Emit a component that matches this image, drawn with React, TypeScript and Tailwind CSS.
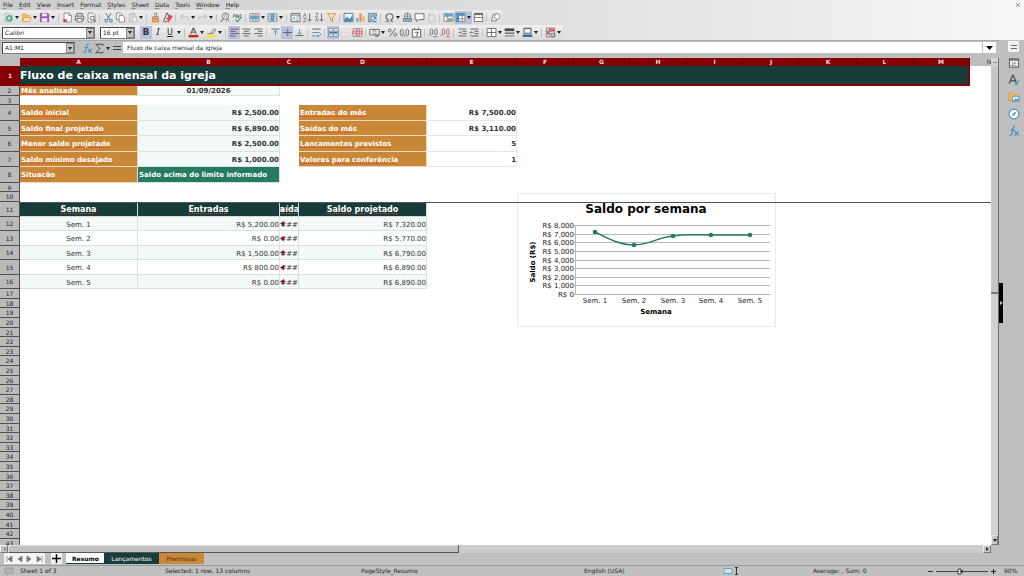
import type { ReactNode } from "react";

const G = "#646464";
const B = "#4a94c6";

const art: Record<string, ReactNode> = {
  new: (
    <>
      <path d="M3 2h7l3 3v9H3z" fill="#eef7f2" stroke="#8aa89a" />
      <circle cx="9" cy="9" r="4.5" fill="#4aa57c" />
      <path d="M9 6.5v5M6.5 9h5" stroke="#fff" strokeWidth="1.4" />
    </>
  ),
  open: (
    <>
      <path d="M2 13V3h5l1.500 2H13v3" fill="#f6c272" stroke="#d9963a" />
      <path d="M2 14l3-6h10l-2.500 6z" fill="#fbe3b8" stroke="#d98a2a" />
    </>
  ),
  save: (
    <>
      <path d="M2 2h11l1 1v11H2z" fill="#a354b5" stroke="#8a3f9e" />
      <path d="M4.500 2h7v4h-7zM4 9h8v5H4z" fill="#f7effa" />
    </>
  ),
  pdf: (
    <>
      <path d="M3 1.500h7l3.500 3.500v9.500H3z" fill="#fff" stroke={G} />
      <path d="M10 1.500V5h3.500" fill="none" stroke={G} />
      <path d="M2 10.500h5v4H2z" fill="#d64550" />
    </>
  ),
  print: (
    <>
      <path d="M4 6V2h8v4M4 12H2V6h12v6h-2" fill="#ddd" stroke={G} strokeWidth="1.300" />
      <path d="M4.500 9.500h7v5h-7z" fill="#fff" stroke={G} strokeWidth="1.300" />
    </>
  ),
  preview: (
    <>
      <path d="M3 1.500h7l3 3v10H3z" fill="#fff" stroke={G} />
      <circle cx="9" cy="9" r="3" fill="#e8eef2" stroke={G} strokeWidth="1.300" />
      <path d="M11 11l3 3" stroke={G} strokeWidth="1.500" />
    </>
  ),
  cut: (
    <>
      <path d="M4 1.500l6 9.500M12 1.500L6 11" stroke={G} strokeWidth="1.300" />
      <circle cx="4.500" cy="12.500" r="2" fill="none" stroke={B} strokeWidth="1.500" />
      <circle cx="11.500" cy="12.500" r="2" fill="none" stroke={B} strokeWidth="1.500" />
    </>
  ),
  copy: (
    <>
      <path d="M2 1.500h6l2 2V11H2z" fill="#fff" stroke={G} />
      <path d="M6 5h5l3 3v6.500H6z" fill="#fff" stroke={G} />
    </>
  ),
  paste: (
    <>
      <path d="M3 3h9v11H3z" fill="#dedede" stroke="#b5b5b5" />
      <path d="M5.500 1.500h4V4h-4zM8 7h6v7.500H8z" fill="#eee" stroke="#b5b5b5" />
    </>
  ),
  brush: (
    <>
      <path d="M7 1.500h2.500V7H7z" fill="#fff" stroke={G} />
      <path d="M4 7h8v2.500H4z" fill="#ddd" stroke={G} />
      <path d="M4 9.500h8l1 5H3z" fill="#f0a35c" stroke="#d9772e" />
    </>
  ),
  clear: (
    <>
      <path d="M2 14L7 2h1l4 9" fill="none" stroke={G} strokeWidth="1.500" />
      <path d="M7 10l5-6 3 3-5 6z" fill="#e0505a" stroke="#b53640" />
      <path d="M3 14h8" stroke="#e0505a" strokeWidth="1.500" />
    </>
  ),
  undo: <path d="M6 3L2 7l4 4M2 7h8c3 0 4 2 4 5" fill="none" stroke="#c6c6c6" strokeWidth="1.500" />,
  redo: <path d="M10 3l4 4-4 4M14 7H6c-3 0-4 2-4 5" fill="none" stroke="#c6c6c6" strokeWidth="1.500" />,
  find: (
    <>
      <path d="M1 14l4-4" stroke={G} strokeWidth="1.600" />
      <circle cx="8" cy="6" r="4.500" fill="#fff" stroke={G} strokeWidth="1.300" />
      <path d="M6 8l2-5 2 5M9 14l2-4.500 2.500 4.500" fill="none" stroke={G} />
    </>
  ),
  spell: (
    <>
      <path d="M1.500 8l2-5 2 5M7 3v5h2.500V5.500H7M14 4h-2.500v4H14" fill="none" stroke={G} strokeWidth="1.200" />
      <path d="M5 11l3 3 6-7" fill="none" stroke="#3aa27a" strokeWidth="1.600" />
    </>
  ),
  row: (
    <>
      <path d="M1.500 2.500h13v11h-13zM1.500 6h13M1.500 10h13M6 2.500v11M10 2.500v11" fill="#fff" stroke={G} />
      <path d="M2 6h12v4H2z" fill="#58a9d8" />
    </>
  ),
  col: (
    <>
      <path d="M1.500 2.500h13v11h-13zM1.500 6h13M1.500 10h13M6 2.500v11M10 2.500v11" fill="#fff" stroke={G} />
      <path d="M5.500 2.500h5v11h-5z" fill="#58a9d8" />
    </>
  ),
  sort: (
    <>
      <path d="M1.500 2h13v12h-13zM1.500 4.500h13" fill="#fff" stroke={G} strokeWidth="1.300" />
      <path d="M3.500 12l2-5 2 5M9 7h3.500L9 12h3.500" fill="none" stroke={B} />
    </>
  ),
  asc: (
    <>
      <path d="M2 7l2-5 2 5M2 9h4l-4 5h4" fill="none" stroke={G} />
      <path d="M11 2v11M8.500 10.500L11 13.500l2.500-3" fill="none" stroke={G} strokeWidth="1.300" />
    </>
  ),
  desc: (
    <>
      <path d="M2 2h4L2 7h4M2 14l2-5 2 5" fill="none" stroke={G} />
      <path d="M11 2v11M8.500 10.500L11 13.500l2.500-3" fill="none" stroke={G} strokeWidth="1.300" />
    </>
  ),
  filter: <path d="M2 2.500h12L9.500 8v6L6.500 12V8z" fill="#fde9cf" stroke="#c98a3c" strokeWidth="1.300" />,
  image: (
    <>
      <path d="M1.500 2h13v12h-13z" fill="#eaf5fc" stroke={G} strokeWidth="1.200" />
      <path d="M2 13.500V10l4-3 3 3 5-5v8.500z" fill="#3f8fc4" />
    </>
  ),
  chart: (
    <>
      <path d="M2 9h3v5H2z" fill="#58a9d8" />
      <path d="M6.500 2h3v12h-3z" fill="#e58a33" />
      <path d="M11 6h3v8h-3z" fill="#e9b850" />
    </>
  ),
  pivot: (
    <>
      <path d="M2 2h12v4H6v8H2z" fill="#8fc6e6" stroke={G} />
      <path d="M8 13l5-5M10 8h3v3M8 14h6" fill="none" stroke={B} strokeWidth="1.500" />
    </>
  ),
  omega: <path d="M2.500 13.500H6v-2C1 8.500 2.500 2.500 8 2.500s7 6 2 9v2h3.500" fill="none" stroke={G} strokeWidth="1.500" />,
  link: (
    <>
      <circle cx="8" cy="6" r="4.500" fill="#dfeef6" stroke={G} />
      <path d="M3.500 6h9M8 1.500v9" stroke={G} />
      <path d="M2 9.500h12v4H2z" fill="#7fbbdd" stroke={G} />
    </>
  ),
  comment: <path d="M1.500 2.500h13v8.500H7l-3 3v-3H1.500z" fill="#fff" stroke={G} strokeWidth="1.300" />,
  header: <path d="M4 2h6l3 3v9H4zM4 5h6" fill="#e2e2e2" stroke="#bdbdbd" />,
  area: (
    <>
      <path d="M1.500 2.500h13v11h-13zM1.500 6h13M6 2.500v11" fill="#fff" stroke={G} />
      <path d="M2 3h12v3H2z" fill="#58a9d8" />
      <path d="M7 9h7v4H7z" fill="#6fb58f" />
    </>
  ),
  freeze: (
    <>
      <path d="M1.500 2h13v12h-13zM1.500 10h13M10.500 2v12" fill="#fff" stroke={G} />
      <path d="M2 2h12v3.500H6V14H2z" fill="#3f8fc4" />
    </>
  ),
  split: (
    <>
      <path d="M2 2h12v12H2zM2 8h12" fill="#fff" stroke={G} strokeWidth="1.200" />
      <path d="M2 2h12v2.500H2z" fill={G} />
    </>
  ),
  shapes: (
    <>
      <path d="M2 13l3-10h6l-2 10z" fill="#eee" stroke={G} />
      <circle cx="10.500" cy="6.500" r="4" fill="#fff" stroke={G} />
    </>
  ),
  left: <path d="M1.500 3h13M1.500 6.300h8M1.500 9.600h13M1.500 13h8" stroke={G} strokeWidth="1.400" />,
  center: <path d="M2 3h12M4.500 6.300h7M2 9.600h12M4.500 13h7" stroke={G} strokeWidth="1.400" />,
  right: <path d="M2 3h12M7 6.300h7M2 9.600h12M7 13h7" stroke={G} strokeWidth="1.400" />,
  top: (
    <>
      <path d="M2 3h12" stroke={G} strokeWidth="1.400" />
      <path d="M8 12V5.500M5.500 8L8 5l2.500 3" fill="none" stroke={B} strokeWidth="1.300" />
    </>
  ),
  middle: (
    <>
      <path d="M1.500 8h13" stroke={G} strokeWidth="1.500" />
      <path d="M8 2v4.500M6 4.500l2 2.500 2-2.500M8 14V9.500M6 11.500L8 9l2 2.500" fill="none" stroke={B} strokeWidth="1.300" />
    </>
  ),
  bottom: (
    <>
      <path d="M2 12.500h12" stroke={G} strokeWidth="1.400" />
      <path d="M8 3v7M5.500 8L8 11l2.500-3" fill="none" stroke={B} strokeWidth="1.300" />
    </>
  ),
  wrap: (
    <>
      <path d="M2 3h12M2 13h4" stroke={G} strokeWidth="1.400" />
      <path d="M2 8h9c4 0 4 5 0 5H8.500M10.500 11L8 13l2.500 2" fill="none" stroke={B} strokeWidth="1.400" />
    </>
  ),
  merge: (
    <>
      <path d="M1 2.500h14v11H1zM1 6h14M1 10h14M8 2.500V6M8 10v3.500" fill="#fff" stroke={G} />
      <path d="M1.500 5.500h13v5h-13z" fill="#7fbbe2" />
      <path d="M3 8h10M5 6.500L3 8l2 1.500M11 6.500L13 8l-2 1.500" fill="none" stroke="#1f5f94" />
    </>
  ),
  unmerge: <path d="M2 3h12v10H2zM2 8h12M8 3v5" fill="#f3e6e6" stroke="#d6cccc" />,
  splitcells: (
    <>
      <path d="M1.500 2.500h13v11h-13zM8 2.500v11" fill="#fff" stroke={G} />
      <path d="M1.500 6h13v4h-13zM6 2.500v11M11 2.500v11" fill="#f7c9cc" stroke="#d64550" />
    </>
  ),
  currency: (
    <>
      <path d="M1 3.500h14v8H1z" fill="#ececec" stroke={G} strokeWidth="1.300" />
      <circle cx="8" cy="7.500" r="2.300" fill="#fff" stroke={G} />
      <path d="M9 11h5v3.500H9z" fill="#8a8a8a" />
    </>
  ),
  percent: (
    <>
      <path d="M3.500 14l9-12" stroke={G} strokeWidth="1.400" />
      <circle cx="4" cy="5" r="2.200" fill="none" stroke={G} strokeWidth="1.300" />
      <circle cx="12" cy="11" r="2.200" fill="none" stroke={G} strokeWidth="1.300" />
    </>
  ),
  number: (
    <>
      <ellipse cx="4" cy="8" rx="2.200" ry="5" fill="none" stroke={G} strokeWidth="1.300" />
      <ellipse cx="12" cy="8" rx="2.200" ry="5" fill="none" stroke={G} strokeWidth="1.300" />
      <circle cx="8" cy="13" r="1" fill={G} />
    </>
  ),
  date: (
    <>
      <path d="M2 3.500h12v11H2zM5 1v3M11 1v3" fill="#fff" stroke={G} strokeWidth="1.500" />
      <path d="M5.500 7.500h5L8 13" fill="none" stroke={G} strokeWidth="1.500" />
    </>
  ),
  adddec: (
    <>
      <ellipse cx="5" cy="7" rx="2" ry="4.500" fill="none" stroke={G} strokeWidth="1.200" />
      <ellipse cx="11.500" cy="7" rx="2" ry="4.500" fill="none" stroke={G} strokeWidth="1.200" />
      <path d="M1 13l1-2M7 14h7" stroke={B} strokeWidth="1.300" />
    </>
  ),
  deldec: (
    <>
      <ellipse cx="5" cy="7" rx="2" ry="4.500" fill="none" stroke={G} strokeWidth="1.200" />
      <ellipse cx="11.500" cy="7" rx="2" ry="4.500" fill="none" stroke="#d64550" strokeWidth="1.200" />
      <path d="M1 13l1-2M9 14h5" stroke="#d64550" strokeWidth="1.300" />
    </>
  ),
  indent: (
    <>
      <path d="M2 3h12M8 6.300h6M8 9.600h6M2 13h12" stroke={G} strokeWidth="1.400" />
      <path d="M2 8h4M4.500 6L6.500 8l-2 2" fill="none" stroke={G} />
    </>
  ),
  outdent: (
    <>
      <path d="M2 3h12M8 6.300h6M8 9.600h6M2 13h12" stroke={G} strokeWidth="1.400" />
      <path d="M6.500 8h-5M3.500 6l-2 2 2 2" fill="none" stroke={G} />
    </>
  ),
  borders: <path d="M1.500 2h13v12h-13zM8 2v12M1.500 8h13" fill="#fff" stroke={G} strokeWidth="1.300" />,
  borderstyle: (
    <>
      <path d="M1 2h14v4H1z" fill="#4a4a4a" />
      <path d="M1 9h14" stroke={G} strokeWidth="2" />
      <path d="M1 13h14" stroke={G} strokeWidth="1.300" />
    </>
  ),
  bordercolor: (
    <>
      <path d="M3 2h10v7H3z" fill="#f2f7fb" stroke={G} strokeWidth="1.500" />
      <path d="M1 11h14v3.500H1z" fill="#2a6db0" />
    </>
  ),
  cond: (
    <>
      <path d="M2 1.500h12v13H2zM2 6h12M2 10h12M6 1.500v13" fill="#eee" stroke={G} />
      <path d="M6 2h8v4H6zM2.500 6H6v4H2.500z" fill="#e0606a" />
      <path d="M9 9h5v5H9z" fill="#c9c9c9" stroke={G} />
    </>
  ),
};

function Icon({ name }: { name: string }) {
  return (
    <svg viewBox="0 0 16 16" className="size-[11px]" aria-hidden="true">
      {art[name]}
    </svg>
  );
}

const Caret = ({ label }: { label: string }) => (
  <button aria-label={label} className="flex w-1.5 items-center justify-center">
    <svg viewBox="0 0 4 3" className="h-[3px] w-1"><path d="M0 0h4L2 3z" fill="#222" /></svg>
  </button>
);
const Sep = () => <span className="flex w-[5px] items-center justify-center"><span className="h-2 w-px bg-[#c2c2c2]" /></span>;

/* Entries ending in "+" open a menu; "*" marks a pressed button; "|" is a divider. */
function Tools({ items }: { items: string[] }) {
  return (
    <>
      {items.map((item, i) => {
        if (item === "|") return <Sep key={i} />;
        const on = item.includes("*");
        const name = item.replace(/[+*]/g, "");
        return (
          <span key={i} className={on ? "flex bg-[#bdbfdc]" : "flex"}>
            <button aria-label={name} className="flex w-3 items-center justify-center"><Icon name={name} /></button>
            {item.includes("+") && <Caret label={name + " options"} />}
          </span>
        );
      })}
    </>
  );
}

const standard = "new+ open+ save+ | pdf print preview | cut copy paste+ | brush clear | undo+ redo+ | find spell | row+ col+ | sort asc desc filter | image chart pivot | omega+ link comment header | area freeze*+ split | shapes".split(" ");
const formatting = "left* center right | top middle* bottom | wrap | merge* unmerge splitcells | currency+ percent number date | adddec deldec | indent outdent | borders+ borderstyle+ bordercolor+ | cond+".split(" ");

function Combo({ label, value, className }: { label: string; value: string; className: string }) {
  return (
    <div className={"flex h-3 border border-[#7b7b7b] border-t-[#4a4a4a] border-l-[#4a4a4a] bg-white " + className}>
      <input aria-label={label} defaultValue={value} className="min-w-0 flex-1 bg-transparent px-0.5 text-[6px] leading-[10px] outline-none" />
      <button aria-label={label + " list"} className="flex w-2 items-center justify-center border border-[#8c8c8c] bg-[#c4c4c4]">
        <svg viewBox="0 0 4 3" className="h-[3px] w-1"><path d="M0 0h4L2 3z" fill="#222" /></svg>
      </button>
    </div>
  );
}

const columns: [string, string][] = [
  ["A", "w-[118px]"], ["B", "w-[142px]"], ["C", "w-[19px]"], ["D", "w-[128px]"], ["E", "w-[90px]"], ["F", "w-[57px]"], ["G", "w-[56px]"],
  ["H", "w-[57px]"], ["I", "w-[56px]"], ["J", "w-[57px]"], ["K", "w-[57px]"], ["L", "w-[56px]"], ["M", "w-[57px]"], ["N", "w-[38px]"],
];

const RowHead = ({ n }: { n: number }) => (
  <th scope="row" className="border-r border-b border-[#505050] bg-[#bababa] text-center text-[6px] leading-[7px] font-normal text-[#222]">{n}</th>
);

const orange = "border-r border-b border-[#ead9c0] bg-[#c98738] pl-px text-left font-bold text-white";
const tinted = "border-r border-b border-[#d9e4df] bg-[#f3f9f6]";
const squiggle = "underline decoration-[#d8432f] decoration-dotted decoration-1 underline-offset-1";

const summary: { n: number; h: string; label: string; value: string; label2?: string; value2?: string }[] = [
  { n: 4, h: "h-4", label: "Saldo inicial", value: "R$ 2,500.00", label2: "Entradas do mês", value2: "R$ 7,500.00" },
  { n: 5, h: "h-[15px]", label: "Saldo final projetado", value: "R$ 6,890.00", label2: "Saídas do mês", value2: "R$ 3,110.00" },
  { n: 6, h: "h-4", label: "Menor saldo projetado", value: "R$ 2,500.00", label2: "Lancamentos previstos", value2: "5" },
  { n: 7, h: "h-[15px]", label: "Saldo mínimo desejado", value: "R$ 1,000.00", label2: "Valores para conferência", value2: "1" },
  { n: 8, h: "h-4", label: "Situacão", value: "Saldo acima do limite informado" },
];

const weeks = [
  { n: 12, h: "h-[14px]", week: "Sem. 1", inflow: "R$ 5,200.00", balance: "R$ 7,320.00" },
  { n: 13, h: "h-[15px]", week: "Sem. 2", inflow: "R$ 0.00", balance: "R$ 5,770.00" },
  { n: 14, h: "h-[14px]", week: "Sem. 3", inflow: "R$ 1,500.00", balance: "R$ 6,790.00" },
  { n: 15, h: "h-[15px]", week: "Sem. 4", inflow: "R$ 800.00", balance: "R$ 6,890.00" },
  { n: 16, h: "h-[14px]", week: "Sem. 5", inflow: "R$ 0.00", balance: "R$ 6,890.00" },
];

const Overflow = ({ dark }: { dark?: boolean }) => (
  <svg viewBox="0 0 4 5" className="absolute top-1/3 left-0 h-[5px] w-1" aria-hidden="true">
    <path d="M4 0v5L0 2.500z" fill={dark ? "#f3d9dc" : "#8e1420"} />
  </svg>
);

function Grid() {
  return (
    <table className="w-[1008px] table-fixed border-separate border-spacing-0 text-[7px] leading-[8px] text-[#333]">
      <colgroup>
        <col className="w-5" />
        {columns.map(([c, w]) => <col key={c} className={w} />)}
      </colgroup>
      <thead>
        <tr className="h-2">
          <td className="bg-[#bdbdbd]" />
          {columns.map(([c]) => (
            <th key={c} scope="col" className={c === "N" ? "bg-[#bdbdbd] text-[6px] leading-[8px] font-normal" : "border-r border-[#5d0000] bg-[#850005] text-[6px] leading-[8px] text-[#f1dcdc]"}>{c}</th>
          ))}
        </tr>
      </thead>
      <tbody>
        <tr className="h-5">
          <th scope="row" className="bg-[#850005] text-[6px] text-[#f1dcdc]">1</th>
          <td colSpan={13} className="border-r-2 border-b-2 border-[#850005] bg-[#183c3a] pt-px text-[11px] leading-[17px] font-bold text-white">Fluxo de caixa mensal da igreja</td>
        </tr>
        <tr className="h-2.5">
          <RowHead n={2} />
          <td className={orange}><span className={squiggle}>Mês analisado</span></td>
          <td className={tinted + " text-center font-bold"}>01/09/2026</td>
        </tr>
        <tr className="h-[9px]"><RowHead n={3} /></tr>
        {summary.map((r) => (
          <tr key={r.n} className={r.h + " [&>td]:pt-px"}>
            <RowHead n={r.n} />
            <td className={orange}><span className={squiggle}>{r.label}</span></td>
            {r.n === 8
              ? <td className="border-r border-b border-[#d9e4df] bg-[#257a62] pl-px font-bold text-white">{r.value}</td>
              : <td className={tinted + " text-right font-bold"}>{r.value}</td>}
            <td />
            {r.label2 && <td className={orange}><span className={squiggle}>{r.label2}</span></td>}
            {r.value2 && <td className="border-r border-b border-[#e4e9e7] text-right font-bold">{r.value2}</td>}
          </tr>
        ))}
        <tr className="h-[9px]"><RowHead n={9} /></tr>
        <tr className="h-2.5"><RowHead n={10} /></tr>
        <tr className="h-[15px] text-[8px]">
          <RowHead n={11} />
          {["Semana", "Entradas", "Saídas", "Saldo projetado"].map((t) => (
            <td key={t} className="relative border-r border-b border-[#cfdcd8] bg-[#183c3a] font-bold text-white">
              <span className="flex justify-center overflow-hidden pt-0.5 leading-[12px]"><span className={squiggle}>{t}</span></span>
              {t === "Saídas" && <Overflow dark />}
            </td>
          ))}
        </tr>
        {weeks.map((r) => {
          const cell = "border-r border-b border-[#d9e0dd] " + (r.n % 2 === 0 ? "bg-[#f3f9f6]" : "bg-white");
          return (
            <tr key={r.n} className={r.h + " [&>td]:pt-0.5"}>
              <RowHead n={r.n} />
              <td className={cell + " text-center"}>{r.week}</td>
              <td className={cell + " text-right"}>{r.inflow}</td>
              <td className={cell + " relative"}><span className="flex justify-end overflow-hidden">###</span><Overflow /></td>
              <td className={cell + " text-right"}>{r.balance}</td>
            </tr>
          );
        })}
        {Array.from({ length: 27 }, (_, i) => (
          <tr key={i} className={i % 5 === 1 || i % 5 === 4 ? "h-[9px]" : "h-2.5"}><RowHead n={17 + i} /></tr>
        ))}
      </tbody>
    </table>
  );
}

function BalanceChart() {
  const xs = [78, 117, 156, 194, 233];
  const ys = [39, 52, 43, 42, 42];
  return (
    <svg viewBox="0 0 259 134" className="absolute top-[135px] left-[517px] h-[134px] w-[259px]" role="img" aria-label="Saldo por semana">
      <rect x="0.5" y="0.5" width="258" height="133" fill="#fff" stroke="#e9e9e9" />
      <text x="129" y="20" textAnchor="middle" className="fill-black text-[12px] font-bold">Saldo por semana</text>
      {[8, 7, 6, 5, 4, 3, 2, 1, 0].map((v, i) => {
        const y = Math.round(32 + i * 8.625) + 0.5;
        return (
          <g key={v}>
            <path d={`M57 ${y}H253`} stroke="#b9b9b9" />
            <text x="57" y={y + 2.5} textAnchor="end" className="fill-[#222] text-[7px]">{v ? `R$ ${v},000` : "R$ 0"}</text>
          </g>
        );
      })}
      <path d="M58.500 32V102" stroke="#b9b9b9" />
      <path d="M78 39C90 45 102 52 117 52C132 52 142 44 156 43C168 41 180 42 194 42H233" fill="none" stroke="#257a62" strokeWidth="1.500" />
      {xs.map((x, i) => (
        <g key={x}>
          <circle cx={x} cy={ys[i]} r="2.300" fill="#257a62" />
          <text x={x} y="110" textAnchor="middle" className="fill-[#222] text-[7px]">{`Sem. ${i + 1}`}</text>
        </g>
      ))}
      <text x="139" y="121" textAnchor="middle" className="fill-black text-[7px] font-bold">Semana</text>
      <text transform="translate(18 69) rotate(-90)" textAnchor="middle" className="fill-black text-[7px] font-bold">Saldo (R$)</text>
    </svg>
  );
}

const bevel = "flex items-center justify-center border border-[#777] border-t-[#eee] border-l-[#eee] bg-[#c6c6c6]";

function VerticalScroll() {
  return (
    <div className="flex w-2 flex-col border-r border-[#6f6f6f] bg-[#d2d2d2]">
      <div className="flex h-2 items-center justify-center bg-[#d4d4d4]"><span className="h-px w-1 bg-[#888]" /></div>
      <div className="h-[228px] border-b-2 border-[#777] bg-[#c6c6c6]" />
      <div className="flex-1" />
      <button aria-label="Scroll down" className={bevel + " h-2.5"}>
        <svg viewBox="0 0 4 3" className="h-[3px] w-1"><path d="M0 0h4L2 3z" fill="#222" /></svg>
      </button>
    </div>
  );
}

const sideIcons: [string, ReactNode][] = [
  ["Properties", <><path d="M2 2.500h12v11H2z" fill="#fff" stroke="#666" strokeWidth="1.500" /><path d="M2 4h12" stroke="#666" strokeWidth="2" /><path d="M4.500 8h7M4.500 11h7M9 7v2M6 10v2" stroke="#666" /></>],
  ["Styles", <><path d="M1.500 13L6 2h1l4.500 11M3.500 9h6" fill="none" stroke="#555" strokeWidth="1.800" /><path d="M8 14.500c2 0 2-2.500 3-3.500l4.500-5-2.500 7c-1 2-3 2.500-5 1.500z" fill="#4a9fd4" /></>],
  ["Gallery", <><path d="M1 13V3h5l1.500 2H13v8z" fill="#f4b860" stroke="#d9963a" /><path d="M6 7h9v7H6z" fill="#e4f2fa" stroke="#4b7ea3" /><path d="M7 13l3-3 2 1 2-2v4z" fill="#3f8fc4" /></>],
  ["Navigator", <><circle cx="8" cy="8" r="6.500" fill="#fff" stroke="#3f8fc4" strokeWidth="1.500" /><path d="M11.500 4.500L9 9l-4.500 2.500L7 7z" fill="#3f8fc4" /></>],
  ["Functions", <><path d="M9.500 2C7 1 6.500 4 6 8s-1.500 6.500-4 5.500M3.500 6.500H9" fill="none" stroke="#3f8fc4" strokeWidth="1.600" /><path d="M9 8.500l5 5.500M14.500 8.500l-6 5.500" stroke="#3f8fc4" strokeWidth="1.500" /></>],
];

function SideBar() {
  return (
    <aside className="relative flex w-[25px] flex-col items-center gap-[5px] bg-[#bfbfbf] pt-px pl-1">
      <button aria-label="Sidebar settings" className="flex h-[11px] w-[11px] items-center justify-center bg-[#f1f1f1]">
        <svg viewBox="0 0 6 6" className="size-1.5"><path d="M0 1.500h6M0 4.500h6" stroke="#666" /></svg>
      </button>
      {sideIcons.map(([label, drawing]) => (
        <button key={label} aria-label={label}><svg viewBox="0 0 16 16" className="size-3">{drawing}</svg></button>
      ))}
      <button aria-label="Hide sidebar" className="absolute top-[243px] left-0 flex h-10 w-1 items-center justify-center bg-black">
        <svg viewBox="0 0 3 4" className="h-1 w-[3px]"><path d="M0 0v4l3-2z" fill="#bbb" /></svg>
      </button>
    </aside>
  );
}

const tabBase = "h-[11px] px-1.5 text-center text-[6px] leading-[11px] ";

export default function App() {
  return (
    <div className="flex h-screen flex-col overflow-hidden bg-[#c0c0c0] font-['DejaVu_Sans',sans-serif] text-[6px] text-[#222]">
      <header className="bg-linear-to-r from-[#cdcdcd] via-[#dedede] to-[#f7f7f7]">
        <nav className="flex h-2.5 items-center gap-1.5 pr-0.5 pl-[3px] leading-[10px]">
          {["File", "Edit", "View", "Insert", "Format", "Styles", "Sheet", "Data", "Tools", "Window", "Help"].map((m) => (
            <button key={m}><span className="underline decoration-[#888] underline-offset-1">{m[0]}</span>{m.slice(1)}</button>
          ))}
          <button aria-label="Close document" className="mr-0.5 ml-auto">
            <svg viewBox="0 0 5 5" className="size-1"><path d="M0 0l5 5M5 0L0 5" stroke="#777" /></svg>
          </button>
        </nav>
        <div className="flex h-[15px] w-fit bg-linear-to-b from-[#ececec] to-[#dcdcdc] py-px pr-px pl-0.5">
          <Tools items={standard} />
        </div>
        <div className="flex h-[15px] w-fit items-center bg-linear-to-b from-[#f0f0f0] to-[#d9d9d9] pr-px pl-0.5">
          <Combo label="Font name" value="Calibri" className="mr-[5px] w-[93px] italic" />
          <Combo label="Font size" value="16 pt" className="mr-[5px] w-[35px]" />
          <div className="flex h-[13px]">
            <button className="w-3 bg-[#bdbfdc] text-[9px] leading-[13px] font-bold text-[#333]">B</button>
            <button className="w-3 font-['DejaVu_Serif',serif] text-[9px] leading-[13px] italic">I</button>
            <button className="w-3 text-[8px] leading-[13px] underline">U</button>
            <Caret label="Underline styles" />
            <Sep />
            <button aria-label="Font colour" className="flex w-3 items-center justify-center">
              <svg viewBox="0 0 16 16" className="size-[11px]"><path d="M4 10L7.500 2h1L12 10M5.500 7.500h5" fill="none" stroke={G} strokeWidth="1.800" /><path d="M1 11.500h14V15H1z" fill="#c9211e" /></svg>
            </button>
            <Caret label="Font colours" />
            <button aria-label="Highlight" className="flex w-3 items-center justify-center">
              <svg viewBox="0 0 16 16" className="size-[11px]"><path d="M7 9l5-7 2.500 2L10 10z" fill="#ddd" stroke={G} /><path d="M2 9.500h6" stroke={G} /><path d="M1 11.500h14V15H1z" fill="#f4e532" /></svg>
            </button>
            <Caret label="Highlight colours" />
            <Sep />
            <Tools items={formatting} />
          </div>
        </div>
      </header>

      <div className="flex min-h-0 flex-1">
        <main className="flex min-w-0 flex-1 flex-col">
          <div className="flex h-[18px] items-start border-t border-[#a9a9a9] bg-[#bfbfbf] pt-px pr-[3px] pl-0.5">
            <Combo label="Name box" value="A1:M1" className="mr-1.5 w-[73px]" />
            <button aria-label="Function wizard" className="flex h-3 w-3 items-center justify-center">
              <svg viewBox="0 0 16 16" className="size-[11px]">{(sideIcons[4][1])}</svg>
            </button>
            <button aria-label="Sum" className="flex h-3 w-3 items-center justify-center">
              <svg viewBox="0 0 16 16" className="size-[11px]"><path d="M13 4V2H3l5.500 6L3 14h10v-2" fill="none" stroke={G} strokeWidth="1.500" /></svg>
            </button>
            <span className="flex h-3"><Caret label="Sum options" /></span>
            <button aria-label="Formula" className="flex h-3 w-3 items-center justify-center">
              <svg viewBox="0 0 8 6" className="h-1.5 w-2"><path d="M0 1.500h8M0 4.500h8" stroke="#444" strokeWidth="1.200" /></svg>
            </button>
            <input aria-label="Formula input" defaultValue="Fluxo de caixa mensal da igreja" className="h-[11px] min-w-0 flex-1 bg-white px-1 text-[6px] outline-none" />
            <button aria-label="Expand formula bar" className="ml-px flex h-[11px] w-[13px] items-center justify-center bg-white">
              <svg viewBox="0 0 7 4" className="h-1 w-[7px]"><path d="M0 0h7L3.500 4z" fill="#000" /></svg>
            </button>
          </div>
          <div className="flex min-h-0 flex-1">
            <div className="relative min-w-0 flex-1 overflow-hidden bg-white">
              <Grid />
              <BalanceChart />
              <div className="absolute top-36 right-0 left-5 h-px bg-[#555]" />
            </div>
            <VerticalScroll />
          </div>
          <div className="flex h-2 pr-2">
            <button aria-label="Scroll left" className={bevel + " w-2"}><svg viewBox="0 0 3 4" className="h-1 w-[3px]"><path d="M3 0v4L0 2z" fill="#888" /></svg></button>
            <div className="w-[451px] border border-[#555] border-t-[#ddd] border-l-[#ddd] bg-[#c0c0c0]" />
            <div className="flex-1 bg-[#cdcdcd]" />
            <button aria-label="Scroll right" className={bevel + " w-2"}><svg viewBox="0 0 3 4" className="h-1 w-[3px]"><path d="M0 0v4l3-2z" fill="#333" /></svg></button>
          </div>
          <div className="flex h-3 items-start">
            <div className="mr-1.5 ml-1 flex h-[11px] w-[41px] items-center justify-around bg-[#f4f4f4]">
              {["M1 0v6M6 0v6L2 3z", "M6 0v6L2 3z", "M1 0v6l4-3z", "M6 0v6M1 0v6l4-3z"].map((d, i) => (
                <button key={d} aria-label={["First sheet", "Previous sheet", "Next sheet", "Last sheet"][i]}>
                  <svg viewBox="0 0 7 6" className="h-1.5 w-[7px]"><path d={d} fill="#777" stroke="#777" strokeWidth="0.700" /></svg>
                </button>
              ))}
            </div>
            <button aria-label="Add sheet" className="mr-1 flex h-[11px] w-[11px] items-center justify-center bg-[#f4f4f4]">
              <svg viewBox="0 0 9 9" className="size-[9px]"><path d="M4.500 0v9M0 4.500h9" stroke="#000" strokeWidth="1.500" /></svg>
            </button>
            <button className={tabBase + "w-[38px] border-b border-[#183c3a] bg-white px-0 font-bold text-black"}>Resumo</button>
            <button className={tabBase + "w-[55px] bg-[#183c3a] text-white"}>Lançamentos</button>
            <button className={tabBase + "w-[45px] bg-[#c98738] text-[#4a2c08]"}>Premissas</button>
          </div>
        </main>
        <SideBar />
      </div>

      <footer className="flex h-[11px] items-center border-t border-[#999] bg-[#c0c0c0] leading-[10px]">
        <svg viewBox="0 0 10 8" className="ml-1 h-2 w-2.5" aria-hidden="true"><path d="M1 1h8v5H5L3 8V6H1z" fill="#b2b2b2" stroke="#999" /></svg>
        <span className="ml-1.5 w-[145px]">Sheet 1 of 3</span>
        <span className="w-[196px]">Selected: 1 row, 13 columns</span>
        <span className="w-[223px]">PageStyle_Resumo</span>
        <span className="flex-1">English (USA)</span>
        <svg viewBox="0 0 16 8" className="mr-[74px] h-2 w-4" aria-hidden="true">
          <path d="M1 1.500h8v5H1z" fill="#cfe3ee" stroke="#6aa5c6" /><path d="M12 .5h3M13.500 .5v7M12 7.500h3" stroke="#333" />
        </svg>
        <span className="w-[115px]">Average: , Sum: 0</span>
        <button aria-label="Zoom out" className="h-px w-[5px] bg-[#333]" />
        <svg viewBox="0 0 52 8" className="mx-[3px] h-2 w-[52px]" aria-hidden="true">
          <path d="M0 4.500h52" stroke="#444" /><path d="M22 2h3v5h-3z" fill="#ddd" stroke="#444" /><circle cx="26" cy="4.500" r="1.300" fill="#222" />
        </svg>
        <button aria-label="Zoom in"><svg viewBox="0 0 5 5" className="size-[5px]"><path d="M2.500 0v5M0 2.500h5" stroke="#222" /></svg></button>
        <span className="ml-2 w-5">90%</span>
      </footer>
    </div>
  );
}
